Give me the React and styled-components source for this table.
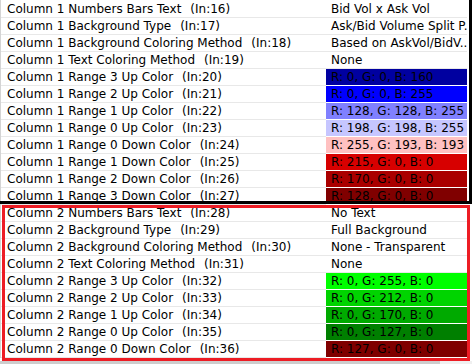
import styled, { createGlobalStyle } from "styled-components";

const GlobalStyle = createGlobalStyle`
  body {
    margin: 0;
    background: #ffffff;
    font-family: "DejaVu Sans", "Liberation Sans", sans-serif;
  }
`;

const Frame = styled.div`
  position: relative;
  width: 472px;
  height: 364px;
  overflow: hidden;
  background: #ffffff;
  display: flex;
  flex-direction: column;
`;

const Grid = styled.div`
  display: flex;
  flex-direction: column;
  width: 466px;
  padding-top: 1px;
  border-left: 1px solid #d4d4d4;
`;

const Row = styled.div`
  display: grid;
  grid-template-columns: 325px 1fr;
  height: 17px;
  font-size: 12px;
  color: #000000;
`;

const Label = styled.div`
  display: flex;
  align-items: center;
  padding-left: 6px;
  white-space: nowrap;
  overflow: hidden;
  border-bottom: 1px solid #e8e8e8;
`;

const LineRef = styled.span`
  margin-left: 9px;
`;

const Value = styled.div`
  display: flex;
  align-items: center;
  padding-left: 5px;
  white-space: nowrap;
  overflow: hidden;
  background: ${(p) => p.$bg || "#ffffff"};
  border-bottom: 1px solid ${(p) => (p.$bg ? "#ffffff" : "#e8e8e8")};
`;

const Scrollbar = styled.div`
  display: flex;
  height: 3px;
  margin-top: 3px;
`;

const Thumb = styled.div`
  width: 440px;
  background: #cdcdcd;
`;

const Track = styled.div`
  flex: 1;
  background: #f0f0f0;
`;

const Marker = styled.div`
  position: absolute;
  box-sizing: border-box;
  pointer-events: none;
  border: 3px solid ${(p) => p.$color};
  left: ${(p) => p.$left}px;
  top: ${(p) => p.$top}px;
  width: ${(p) => p.$width}px;
  height: ${(p) => p.$height}px;
`;

const rows = [
  ["Column 1 Numbers Bars Text", 16, "Bid Vol x Ask Vol"],
  ["Column 1 Background Type", 17, "Ask/Bid Volume Split P..."],
  ["Column 1 Background Coloring Method", 18, "Based on AskVol/BidV..."],
  ["Column 1 Text Coloring Method", 19, "None"],
  ["Column 1 Range 3 Up Color", 20, "R: 0, G: 0, B: 160", "#0000a0"],
  ["Column 1 Range 2 Up Color", 21, "R: 0, G: 0, B: 255", "#0000ff"],
  ["Column 1 Range 1 Up Color", 22, "R: 128, G: 128, B: 255", "#8080ff"],
  ["Column 1 Range 0 Up Color", 23, "R: 198, G: 198, B: 255", "#c6c6ff"],
  ["Column 1 Range 0 Down Color", 24, "R: 255, G: 193, B: 193", "#ffc1c1"],
  ["Column 1 Range 1 Down Color", 25, "R: 215, G: 0, B: 0", "#d70000"],
  ["Column 1 Range 2 Down Color", 26, "R: 170, G: 0, B: 0", "#aa0000"],
  ["Column 1 Range 3 Down Color", 27, "R: 128, G: 0, B: 0", "#800000"],
  ["Column 2 Numbers Bars Text", 28, "No Text"],
  ["Column 2 Background Type", 29, "Full Background"],
  ["Column 2 Background Coloring Method", 30, "None - Transparent"],
  ["Column 2 Text Coloring Method", 31, "None"],
  ["Column 2 Range 3 Up Color", 32, "R: 0, G: 255, B: 0", "#00ff00"],
  ["Column 2 Range 2 Up Color", 33, "R: 0, G: 212, B: 0", "#00d400"],
  ["Column 2 Range 1 Up Color", 34, "R: 0, G: 170, B: 0", "#00aa00"],
  ["Column 2 Range 0 Up Color", 35, "R: 0, G: 127, B: 0", "#007f00"],
  ["Column 2 Range 0 Down Color", 36, "R: 127, G: 0, B: 0", "#7f0000"],
];

function App() {
  return (
    <Frame>
      <GlobalStyle />
      <Grid>
        {rows.map(([name, ln, value, bg]) => (
          <Row key={ln}>
            <Label>
              {name}
              <LineRef>(In:{ln})</LineRef>
            </Label>
            <Value $bg={bg}>{value}</Value>
          </Row>
        ))}
      </Grid>
      <Scrollbar>
        <Thumb />
        <Track />
      </Scrollbar>
      <Marker $color="#000000" $left={-3} $top={-3} $width={475} $height={207} />
      <Marker $color="#ed1c24" $left={2} $top={205} $width={468} $height={156} />
    </Frame>
  );
}

export default App;
